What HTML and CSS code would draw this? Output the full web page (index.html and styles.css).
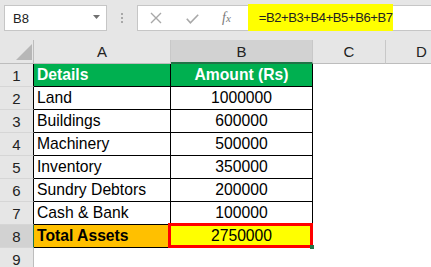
FILE: index.html
```html
<!DOCTYPE html>
<html lang="en">

<head>
    <meta charset="UTF-8">
    <title>Total Assets</title>
    <link rel="stylesheet" href="styles.css">
</head>

<body>
    <div class="toolbar">
        <div class="name-box">
            <span>B8</span>
            <svg class="caret" width="7" height="4" viewBox="0 0 7 4"><polygon points="0,0 7,0 3.5,4" fill="#707070"/></svg>
        </div>
        <div class="grip"><i></i><i></i><i></i></div>
        <div class="formula-box">
            <svg class="cancel" width="12" height="12" viewBox="0 0 12 12">
                <path d="M1 1 L11 11 M11 1 L1 11" stroke="#a8a8a8" stroke-width="1.4" fill="none"/>
            </svg>
            <svg class="enter" width="13" height="10" viewBox="0 0 13 10">
                <path d="M0.8 4.8 L4.4 8.8 L12.2 0.8" stroke="#a8a8a8" stroke-width="1.6" fill="none"/>
            </svg>
            <span class="fx">f<small>x</small></span>
            <div class="formula">=B2+B3+B4+B5+B6+B7</div>
        </div>
    </div>

    <div class="sheet">
        <!-- column headers -->
        <div class="corner">
            <svg width="16" height="16" viewBox="0 0 16 16"><polygon points="0,16 16,16 16,0" fill="#b7b7b7"/></svg>
        </div>
        <div class="col-head">A</div>
        <div class="col-head selected">B</div>
        <div class="col-head">C</div>
        <div class="col-head cut">D</div>

        <div class="row-head">1</div>
        <div class="cell a title">Details</div>
        <div class="cell b title">Amount (Rs)</div>
        <div></div><div></div>

        <div class="row-head">2</div>
        <div class="cell a">Land</div>
        <div class="cell b">1000000</div>
        <div></div><div></div>

        <div class="row-head">3</div>
        <div class="cell a">Buildings</div>
        <div class="cell b">600000</div>
        <div></div><div></div>

        <div class="row-head">4</div>
        <div class="cell a">Machinery</div>
        <div class="cell b">500000</div>
        <div></div><div></div>

        <div class="row-head">5</div>
        <div class="cell a">Inventory</div>
        <div class="cell b">350000</div>
        <div></div><div></div>

        <div class="row-head">6</div>
        <div class="cell a">Sundry Debtors</div>
        <div class="cell b">200000</div>
        <div></div><div></div>

        <div class="row-head">7</div>
        <div class="cell a">Cash &amp; Bank</div>
        <div class="cell b">100000</div>
        <div></div><div></div>

        <div class="row-head selected">8</div>
        <div class="cell a total">Total Assets</div>
        <div class="cell b active">2750000</div>
        <div></div><div></div>

        <div class="row-head last">9</div>
        <div></div><div></div><div></div><div></div>
    </div>
</body>

</html>
```

FILE: styles.css
```css
body {
    margin: 0;
    width: 431px;
    height: 267px;
    overflow: hidden;
    background-color: #ffffff;
    font-family: 'Liberation Sans', Arial, sans-serif;
    color: #000;
}

/* name box + formula bar */
.toolbar {
    height: 40px;
    background-color: #e6e6e6;
    display: flex;
    align-items: flex-start;
    padding-top: 5px;
    box-sizing: border-box;
}

.name-box {
    flex-shrink: 0;
    margin-left: 4px;
    width: 103px;
    height: 26px;
    box-sizing: border-box;
    background-color: #fff;
    border: 1px solid #c6c6c6;
    display: flex;
    align-items: center;
    justify-content: space-between;
    padding: 0 6px 0 8px;
    font-size: 13px;
    color: #222;
}

.caret {
    margin-top: -2px;
}

.grip {
    flex-shrink: 0;
    margin-left: 14px;
    width: 2px;
    padding-top: 8px;
    display: flex;
    flex-direction: column;
    gap: 2px;
}

.grip i {
    display: block;
    width: 2px;
    height: 2px;
    background-color: #a8a8a8;
}

/* runs on past the right edge, so no right border */
.formula-box {
    margin-left: 14px;
    flex: 1;
    height: 26px;
    box-sizing: border-box;
    background-color: #fff;
    border: 1px solid #c6c6c6;
    border-right: none;
    display: flex;
    align-items: center;
}

.cancel {
    flex-shrink: 0;
    margin-left: 12px;
}

.enter {
    flex-shrink: 0;
    margin-left: 24px;
    margin-top: 2px;
}

.fx {
    margin-left: 23px;
    font-family: 'Liberation Serif', serif;
    font-style: italic;
    font-size: 14px;
    color: #7a7a7a;
}

.fx small {
    font-size: 11px;
}

.formula {
    flex-shrink: 0;
    margin-left: 17px;
    align-self: stretch;
    margin-top: -2px;
    margin-bottom: -1px;
    width: 145px;
    box-sizing: border-box;
    padding-left: 11px;
    background-color: #ffff00;
    display: flex;
    align-items: center;
    font-size: 13px;
    letter-spacing: -0.4px;
    color: #222;
}

/* worksheet grid */
.sheet {
    display: grid;
    grid-template-columns: 34px 137px 142px 73px 1fr;
    grid-template-rows: 24px repeat(9, 23px);
}

.corner {
    background-color: #e6e6e6;
    border-right: 1px solid #bdbdbd;
    border-bottom: 1px solid #bdbdbd;
    box-sizing: border-box;
    display: flex;
    align-items: flex-end;
    justify-content: flex-end;
    padding: 0 1px 3px 0;
}

.col-head {
    background-color: #e6e6e6;
    border-right: 1px solid #c8c8c8;
    border-bottom: 1px solid #bdbdbd;
    box-sizing: border-box;
    display: flex;
    align-items: center;
    justify-content: center;
    font-size: 15px;
    color: #222;
}

.col-head.selected {
    background-color: #d2d2d2;
    border-bottom: 2px solid #217346;
}

.col-head.cut {
    justify-content: flex-start;
    padding-left: 30px;
    border-right: none;
}

.row-head {
    background-color: #e6e6e6;
    border-right: 1px solid #000;
    border-bottom: 1px solid #d6d6d6;
    box-sizing: border-box;
    display: flex;
    align-items: center;
    justify-content: center;
    font-size: 15px;
    color: #222;
}

.row-head.selected {
    background-color: #d2d2d2;
    border-right: 1px solid #217346;
}

.row-head.last {
    border-right-color: #bdbdbd;
    border-bottom: none;
}

.cell {
    border-right: 1px solid #000;
    border-bottom: 1px solid #000;
    box-sizing: border-box;
    display: flex;
    align-items: center;
    font-size: 15.7px;
}

.cell.a {
    padding-left: 3px;
}

.cell.b {
    justify-content: center;
}

.cell.title {
    background-color: #00b050;
    color: #fff;
    font-weight: bold;
}

.cell.total {
    background-color: #ffc000;
    font-weight: bold;
}

.cell.active {
    background-color: #ffff00;
    position: relative;
}

/* red outline drawn round the active cell */
.cell.active::after {
    content: '';
    position: absolute;
    top: -2px;
    left: -3px;
    right: -1px;
    bottom: -1px;
    border: 3px solid #ff0000;
}

.cell.active::before {
    content: '';
    position: absolute;
    right: -2px;
    bottom: -2px;
    width: 4px;
    height: 4px;
    background-color: #217346;
    z-index: 1;
}
```
